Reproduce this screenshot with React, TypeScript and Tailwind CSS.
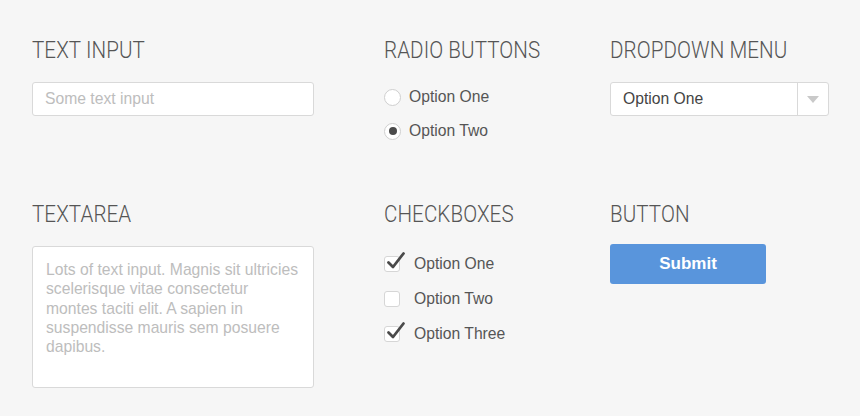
import { useState } from 'react';

const HEADING =
  "inline-block origin-left scale-x-[0.84] font-['Roboto',sans-serif] text-[24.5px] leading-6 font-light uppercase text-[#555] tracking-[0.1px]";

const BODY = "font-['Liberation_Sans',Arial,sans-serif]";

function Heading({ children }: { children: string }) {
  return (
    <div className="h-6 whitespace-nowrap">
      <h2 className={HEADING}>{children}</h2>
    </div>
  );
}

function Radio({ label, checked, onSelect }: { label: string; checked: boolean; onSelect: () => void }) {
  return (
    <button onClick={onSelect} className="flex h-[34px] items-center gap-2 text-left">
      <span className="flex h-[17px] w-[17px] items-center justify-center rounded-full border border-[#cfcfcf] bg-white">
        {checked && <span className="h-2 w-2 rounded-full bg-[#4a4a4a]" />}
      </span>
      <span className="text-[15.7px] text-[#555]">{label}</span>
    </button>
  );
}

function Checkbox({ label, checked, onToggle }: { label: string; checked: boolean; onToggle: () => void }) {
  return (
    <button onClick={onToggle} className="flex h-[35px] items-center gap-[14px] text-left">
      <span className="relative h-4 w-4 rounded-[3px] border border-[#d6d6d6] bg-white">
        {checked && (
          <svg viewBox="0 0 20 20" className="absolute -top-[6px] left-[1px] h-[20px] w-[20px]">
            <path d="M2.5 11.5 L7 16 L17.5 2.5" fill="none" stroke="#4a4a4a" strokeWidth="2.8" strokeLinecap="round" strokeLinejoin="round" />
          </svg>
        )}
      </span>
      <span className="text-[15.7px] text-[#555]">{label}</span>
    </button>
  );
}

export default function App() {
  const [radio, setRadio] = useState('two');
  const [checks, setChecks] = useState({ one: true, two: false, three: true });

  return (
    <div className={`min-h-[416px] w-[860px] bg-[#f6f6f6] pl-8 pt-[38px] ${BODY}`}>
      <div className="grid grid-cols-[352px_226px_220px] grid-rows-[164px_auto]">
        {/* Text input */}
        <div>
          <Heading>Text Input</Heading>
          <input
            placeholder="Some text input"
            className="mt-5 h-[34px] w-[282px] rounded-[3px] border border-[#d9d9d9] bg-white px-3 text-[15.7px] text-[#555] placeholder:text-[#bdbdbd] focus:outline-none"
          />
        </div>

        {/* Radio buttons */}
        <div>
          <Heading>Radio Buttons</Heading>
          <div className="mt-[18px] flex flex-col">
            <Radio label="Option One" checked={radio === 'one'} onSelect={() => setRadio('one')} />
            <Radio label="Option Two" checked={radio === 'two'} onSelect={() => setRadio('two')} />
          </div>
        </div>

        {/* Dropdown */}
        <div>
          <Heading>Dropdown Menu</Heading>
          <div className="mt-5 flex h-[34px] w-[219px] items-stretch rounded-[3px] border border-[#d9d9d9] bg-white">
            <span className="flex flex-1 items-center px-3 text-[15.7px] text-[#444]">Option One</span>
            <span className="flex w-[31px] items-center justify-center border-l border-[#d9d9d9]">
              <svg viewBox="0 0 12 7" className="h-[7px] w-3">
                <path d="M0 0 H12 L6 7 Z" fill="#c9c9c9" />
              </svg>
            </span>
          </div>
        </div>

        {/* Textarea */}
        <div>
          <Heading>Textarea</Heading>
          <textarea
            placeholder={'Lots of text input. Magnis sit ultricies\nscelerisque vitae consectetur\nmontes taciti elit. A sapien in\nsuspendisse mauris sem posuere\ndapibus.'}
            className="mt-5 block h-[142px] w-[282px] resize-none rounded-[3px] border border-[#d9d9d9] bg-white pl-[13px] pr-1 pt-[13px] text-[15.7px] leading-[19.3px] text-[#555] placeholder:text-[#bdbdbd] focus:outline-none"
          />
        </div>

        {/* Checkboxes */}
        <div>
          <Heading>Checkboxes</Heading>
          <div className="mt-5 flex flex-col">
            <Checkbox label="Option One" checked={checks.one} onToggle={() => setChecks({ ...checks, one: !checks.one })} />
            <Checkbox label="Option Two" checked={checks.two} onToggle={() => setChecks({ ...checks, two: !checks.two })} />
            <Checkbox label="Option Three" checked={checks.three} onToggle={() => setChecks({ ...checks, three: !checks.three })} />
          </div>
        </div>

        {/* Button */}
        <div>
          <Heading>Button</Heading>
          <button className="mt-[18px] h-10 w-[156px] rounded-[3px] bg-[#5995dc] text-[17px] font-bold text-white">
            Submit
          </button>
        </div>
      </div>
    </div>
  );
}
